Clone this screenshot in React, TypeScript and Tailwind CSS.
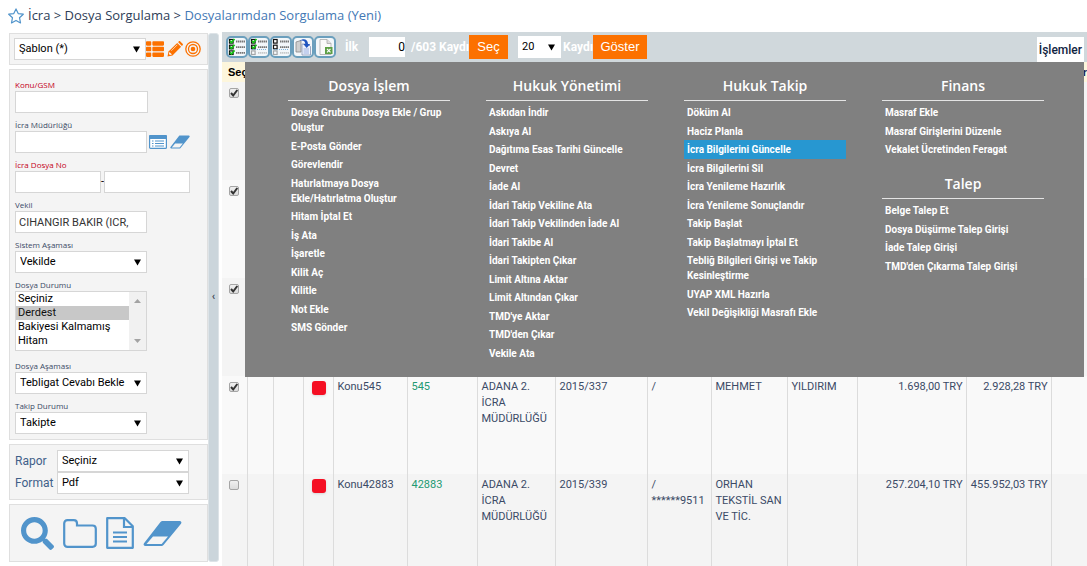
import { ReactNode, useState } from 'react';
import { FaSearch, FaThList } from 'react-icons/fa';

type SelectBoxProps = {
  id: string;
  value: string;
  width?: string;
  border?: string;
};

type MenuGroup = {
  title: string;
  items: string[];
};

type Row = {
  checked: boolean;
  konu?: string;
  no?: string;
  mudurluk?: string;
  dosya?: string;
  tel?: string;
  ad?: string;
  soyad?: string;
  tutar?: string;
  bakiye?: string;
};

const ACTIVE_ITEM = 'İcra Bilgilerini Güncelle';

const menuColumns: MenuGroup[][] = [
  [
    {
      title: 'Dosya İşlem',
      items: [
        'Dosya Grubuna Dosya Ekle / Grup Oluştur', 'E-Posta Gönder', 'Görevlendir',
        'Hatırlatmaya Dosya Ekle/Hatırlatma Oluştur', 'Hitam İptal Et', 'İş Ata',
        'İşaretle', 'Kilit Aç', 'Kilitle', 'Not Ekle', 'SMS Gönder',
      ],
    },
  ],
  [
    {
      title: 'Hukuk Yönetimi',
      items: [
        'Askıdan İndir', 'Askıya Al', 'Dağıtıma Esas Tarihi Güncelle', 'Devret', 'İade Al',
        'İdari Takip Vekiline Ata', 'İdari Takip Vekilinden İade Al', 'İdari Takibe Al',
        'İdari Takipten Çıkar', 'Limit Altına Aktar', 'Limit Altından Çıkar',
        "TMD'ye Aktar", "TMD'den Çıkar", 'Vekile Ata',
      ],
    },
  ],
  [
    {
      title: 'Hukuk Takip',
      items: [
        'Döküm Al', 'Haciz Planla', 'İcra Bilgilerini Güncelle', 'İcra Bilgilerini Sil',
        'İcra Yenileme Hazırlık', 'İcra Yenileme Sonuçlandır', 'Takip Başlat',
        'Takip Başlatmayı İptal Et', 'Tebliğ Bilgileri Girişi ve Takip Kesinleştirme',
        'UYAP XML Hazırla', 'Vekil Değişikliği Masrafı Ekle',
      ],
    },
  ],
  [
    {
      title: 'Finans',
      items: ['Masraf Ekle', 'Masraf Girişlerini Düzenle', 'Vekalet Ücretinden Feragat'],
    },
    {
      title: 'Talep',
      items: [
        'Belge Talep Et', 'Dosya Düşürme Talep Girişi', 'İade Talep Girişi',
        "TMD'den Çıkarma Talep Girişi",
      ],
    },
  ],
];

const rows: Row[] = [
  { checked: true },
  { checked: true },
  { checked: true },
  {
    checked: true,
    konu: 'Konu545',
    no: '545',
    mudurluk: 'ADANA 2. İCRA MÜDÜRLÜĞÜ',
    dosya: '2015/337',
    tel: '/',
    ad: 'MEHMET',
    soyad: 'YILDIRIM',
    tutar: '1.698,00 TRY',
    bakiye: '2.928,28 TRY',
  },
  {
    checked: false,
    konu: 'Konu42883',
    no: '42883',
    mudurluk: 'ADANA 2. İCRA MÜDÜRLÜĞÜ',
    dosya: '2015/339',
    tel: '/ ******9511',
    ad: 'ORHAN TEKSTİL SAN VE TİC.',
    tutar: '257.204,10 TRY',
    bakiye: '455.952,03 TRY',
  },
];

function Star() {
  return (
    <svg className="size-4" viewBox="0 0 16 16" fill="none" stroke="#5194cb" strokeWidth="1.2" strokeLinejoin="round">
      <path d="M8 .9l2.2 4.7 5.1.6-3.8 3.5 1 5.2L8 12.4l-4.5 2.5 1-5.2L.7 6.2l5.1-.6z" />
    </svg>
  );
}

function Pencil() {
  return (
    <svg className="size-4" viewBox="0 0 16 16">
      <path d="M.5 15.5l1-5L10.200 1.900l3.900 3.900L5.500 14.500z" fill="#fc7100" />
      <path d="M11 1.100l.8-.7c.5-.4 1-.4 1.500 0l2.300 2.300c.5.5.5 1 0 1.500l-.7.800z" fill="#fc7100" />
      <path d="M2.400 11l2.600 2.600-2 .5-1.100-1.100z" fill="#f4f4f4" />
      <path d="M4.300 9.800l6-6" stroke="#f4f4f4" strokeWidth=".7" />
    </svg>
  );
}

function Target() {
  return (
    <svg className="size-4" viewBox="0 0 16 16" fill="none" stroke="#fc7100">
      <circle cx="8" cy="8" r="7.200" strokeWidth="1.300" />
      <circle cx="8" cy="8" r="4.500" strokeWidth="1.300" />
      <circle cx="8" cy="8" r="2.300" fill="#fc7100" stroke="none" />
    </svg>
  );
}

function ListCard() {
  return (
    <svg className="h-[14px] w-[18px]" viewBox="0 0 18 14">
      <rect x=".6" y=".6" width="16.800" height="12.800" rx="1" fill="#fff" stroke="#5194cb" strokeWidth="1.200" />
      <path d="M0 1.200Q0 0 1.200 0h15.600Q18 0 18 1.200V4H0z" fill="#5194cb" />
      <path d="M3 6h1.500M3 8.500h1.500M3 11h1.500M6 6h9M6 8.500h9M6 11h9" stroke="#5194cb" />
    </svg>
  );
}

function Eraser({ className }: { className: string }) {
  return (
    <svg className={className} viewBox="0 0 39 27">
      <path
        d="M19.500 1h17.200c1.500 0 2.300 1.500 1.300 2.700L20.500 25c-.6.700-1.200 1-2 1H2.300C.8 26 0 24.500 1 23.300L17.500 2c.6-.7 1.200-1 2-1z"
        fill="#5194cb"
      />
      <path d="M10 16.500h15l-6.300 7.500H3.500z" fill="#f4f4f4" />
    </svg>
  );
}

function Folder() {
  return (
    <svg className="h-[29px] w-[34px]" viewBox="0 0 34 29" fill="none" stroke="#5194cb" strokeWidth="2.200">
      <path d="M1.200 4.500c0-2 1.300-3.300 3.300-3.300h6.200c2 0 3.300 1.300 3.300 3.300v2h15.500c2 0 3.300 1.300 3.300 3.300v14.700c0 2-1.300 3.300-3.300 3.300h-25c-2 0-3.300-1.300-3.300-3.300z" />
    </svg>
  );
}

function FileText() {
  return (
    <svg className="h-8 w-7" viewBox="0 0 28 32" fill="none" stroke="#5194cb" strokeWidth="2.200">
      <path d="M1.200 1.200h17.600l8 8v21.600H1.200z" strokeLinejoin="round" />
      <path d="M18 1.500v8.500h8.500" />
      <path d="M7 15.500h14M7 20h14M7 24.500h14" strokeWidth="1.900" />
    </svg>
  );
}

// three lines of a check list, `count` of them ticked
function CheckLines({ count }: { count: number }) {
  return (
    <svg className="size-[18px]" viewBox="0 0 18 18">
      {[0, 1, 2].map((i) => {
        const y = 1 + i * 5.700;
        const faded = i === 2 && count < 3;
        return (
          <g key={i} transform={`translate(0 ${y})`} opacity={faded ? 0.35 : 1}>
            <rect x="1.500" y=".5" width="3.600" height="3.600" fill="#fff" stroke="#111" strokeWidth="1.200" />
            {i < count && <path d="M2 1.800l1.500 1.800L6.500 0" fill="none" stroke="#14c014" strokeWidth="1.700" />}
            <path d="M8 2.500h9" stroke="#777" strokeWidth="1.800" strokeDasharray="1.500 .5" />
          </g>
        );
      })}
      {count < 3 && <path d="M1 11.500h16" stroke="#7fb4dc" strokeDasharray="1 1" />}
    </svg>
  );
}

function CopyPages() {
  return (
    <svg className="size-[18px]" viewBox="0 0 18 18">
      <path d="M2 4l5-1.500V14H2z" fill="#d0d0d0" stroke="#888" strokeWidth=".8" />
      <path d="M8 6h6l2.500 2.500V17H8z" fill="#eef3fc" stroke="#8795b5" strokeWidth=".8" />
      <path d="M9.500 11h5.500M9.500 13h5.500M9.500 15h5.500" stroke="#9aaee0" />
      <path d="M5.500 2.800c4-3 8.500-1.500 8.500 3.200h2.200L12.700 10 9.300 6h2c0-3-2.500-4-5.800-3.200z" fill="#1f55c0" />
    </svg>
  );
}

function ExcelPage() {
  return (
    <svg className="size-[18px]" viewBox="0 0 18 18">
      <path d="M4 1.500h7l4 4v11H4z" fill="#fafafa" stroke="#aaa" strokeWidth=".8" />
      <path d="M11 1.500v4h4" fill="#ddd" stroke="#aaa" strokeWidth=".8" />
      <rect x="9" y="9" width="7.500" height="7" fill="#5d9f45" />
      <path d="M11 10.800l3.500 3.500M14.500 10.800L11 14.300" stroke="#fff" strokeWidth="1.200" />
    </svg>
  );
}

function Panel({ children, className = '' }: { children: ReactNode; className?: string }) {
  return <section className={`border border-[#dfdfdf] bg-[#f4f4f4] ${className}`}>{children}</section>;
}

function SelectBox({ id, value, width = 'w-[132px]', border = 'border border-[#d6d6d6]' }: SelectBoxProps) {
  return (
    <div className={`relative ${width}`}>
      <select id={id} className={`block h-[22px] w-full appearance-none bg-white pr-4 pl-1 text-[11px] text-black ${border}`}>
        <option>{value}</option>
      </select>
      <svg className="pointer-events-none absolute top-2 right-[6px] size-[7px]" viewBox="0 0 7 7">
        <path d="M0 .5h7L3.500 6.500z" fill="#000" />
      </svg>
    </div>
  );
}

function Field({ id, label, red, children }: { id: string; label: string; red?: boolean; children: ReactNode }) {
  return (
    <div>
      <label
        htmlFor={id}
        className={`block font-['Open_Sans','Noto_Sans',sans-serif] text-[8px] leading-3 ${red ? 'text-[#c4001a]' : 'text-[#3b4a66]'}`}
      >
        {label}
      </label>
      {children}
    </div>
  );
}

function CheckBox({ label, defaultChecked }: { label: string; defaultChecked: boolean }) {
  return (
    <span className="relative mx-auto block size-[10px]">
      <input
        type="checkbox"
        aria-label={label}
        defaultChecked={defaultChecked}
        className="peer block size-[10px] appearance-none rounded-[2px] border border-[#a5a5a5] bg-linear-to-b from-[#f0f0f0] to-[#dcdcdc]"
      />
      <svg className="pointer-events-none absolute inset-0 hidden size-[10px] peer-checked:block" viewBox="0 0 10 10">
        <path d="M2 5l2.200 2.500L8.300 2" fill="none" stroke="#333" strokeWidth="2" />
      </svg>
    </span>
  );
}

function ActionsMenu() {
  return (
    <nav className="absolute top-[30px] right-[3px] left-[23px] z-10 flex gap-9 bg-[#808080] pt-[14px] pb-[15px] pl-[43px] text-white">
      {menuColumns.map((groups, i) => (
        <div key={i} className="flex w-[162px] flex-col gap-[15px]">
          {groups.map((group) => (
            <div key={group.title}>
              <h3 className="mb-[2px] border-b border-[#e4e4e4] pb-1 text-center font-['Open_Sans','Noto_Sans',sans-serif] text-[14px] leading-5 font-semibold">
                {group.title}
              </h3>
              <ul>
                {group.items.map((item) => (
                  <li key={item} className={`pt-[2px] pb-[2px] even:pb-px ${item === ACTIVE_ITEM ? 'bg-[#2797d1]' : ''}`}>
                    <a href="#" className="block pl-[3px] text-[10px] leading-[15px] font-bold">{item}</a>
                  </li>
                ))}
              </ul>
            </div>
          ))}
        </div>
      ))}
    </nav>
  );
}

function Toolbar() {
  const [count, setCount] = useState('0');

  const tools = [
    { name: 'Tümünü seç', icon: <CheckLines count={3} /> },
    { name: 'Sayfayı seç', icon: <CheckLines count={2} /> },
    { name: 'Seçimi kaldır', icon: <CheckLines count={0} /> },
    { name: 'Kopyala', icon: <CopyPages /> },
    { name: 'Excel', icon: <ExcelPage /> },
  ];

  return (
    <div className="flex h-[30px] items-center bg-[#d0d8dc] pr-[3px] pl-1 text-[12px] font-bold text-white">
      {tools.map((tool) => (
        <button
          key={tool.name}
          aria-label={tool.name}
          className="flex size-[22px] items-center justify-center rounded-[5px] border-2 border-[#6b9fbd] bg-[#f3f7fa]"
        >
          {tool.icon}
        </button>
      ))}
      <label htmlFor="ilk" className="ml-[9px] w-6">İlk</label>
      <input
        id="ilk"
        value={count}
        onChange={(e) => setCount(e.target.value)}
        className="h-5 w-9 bg-white text-right text-[12px] font-normal text-black"
      />
      <span className="ml-[6px] w-[58px] whitespace-nowrap">/603 Kaydı</span>
      <button className="h-6 w-[39px] bg-[#fc7100] font-['Liberation_Sans',sans-serif] text-[13px] font-normal">Seç</button>
      <div className="ml-[10px] font-normal">
        <SelectBox id="adet" value="20" width="w-[43px]" border="" />
      </div>
      <label htmlFor="adet" className="ml-[2px] w-[30px] whitespace-nowrap">Kaydı</label>
      <button className="h-6 w-[54px] bg-[#fc7100] font-['Liberation_Sans',sans-serif] text-[13px] font-normal">Göster</button>
      <button className="ml-auto h-[25px] self-end bg-white px-[2px] text-[12px] font-medium text-[#10243f]">İşlemler</button>
    </div>
  );
}

function ResultsTable() {
  const cell = 'border-l border-[#dcdcdc] pr-[3px] pl-1 pt-[3px] align-top';

  return (
    <table className="w-full table-fixed border-collapse text-[11px] leading-4 text-[#3b4a66]">
      <colgroup>
        <col className="w-[25px]" />
        <col className="w-[26px]" />
        <col className="w-[30px]" />
        <col className="w-[30px]" />
        <col className="w-[74px]" />
        <col className="w-[70px]" />
        <col className="w-[78px]" />
        <col className="w-[92px]" />
        <col className="w-[64px]" />
        <col className="w-[76px]" />
        <col className="w-[70px]" />
        <col className="w-[109px]" />
        <col className="w-[85px]" />
        <col />
      </colgroup>
      <thead>
        <tr className="h-5 bg-[#fdf6dc] font-['Liberation_Sans',sans-serif] text-[11px] text-black">
          <th className="pl-[6px] text-left">Seç</th>
          <th colSpan={12} />
          <th className="text-right text-[#1a2550]">r</th>
        </tr>
      </thead>
      <tbody>
        {rows.map((row, i) => (
          <tr key={i} className="h-[98px] odd:bg-[#f4f4f4] even:bg-[#f9f9f9]">
            <td className="pt-[6px] align-top">
              <CheckBox label={`Satır ${i + 1}`} defaultChecked={row.checked} />
            </td>
            <td className={cell} />
            <td className={cell} />
            <td className="border-l border-[#dcdcdc] pt-[5px] pl-2 align-top">
              {row.konu && <span className="block size-[14px] rounded-[3px] bg-[#f50f23] shadow-sm" />}
            </td>
            <td className={cell}>{row.konu}</td>
            <td className={`${cell} text-[#229a72]`}>{row.no}</td>
            <td className={cell}>{row.mudurluk}</td>
            <td className={cell}>{row.dosya}</td>
            <td className={cell}>{row.tel}</td>
            <td className={cell}>{row.ad}</td>
            <td className={cell}>{row.soyad}</td>
            <td className={`${cell} text-right`}>{row.tutar}</td>
            <td className={`${cell} text-right`}>{row.bakiye}</td>
            <td className={cell} />
          </tr>
        ))}
      </tbody>
    </table>
  );
}

function Sidebar() {
  const input = 'block h-[22px] border border-[#d6d6d6] bg-white px-[3px] text-[11px] text-[#333]';

  return (
    <aside className="flex w-[199px] shrink-0 flex-col gap-1">
      <Panel className="flex items-center px-1 py-1">
        <SelectBox id="sablon" value="Şablon (*)" />
        <div className="flex flex-1 items-center justify-between pr-[2px] text-[#fc7100]">
          <button aria-label="Liste"><FaThList className="size-[18px]" /></button>
          <button aria-label="Düzenle"><Pencil /></button>
          <button aria-label="Hedef"><Target /></button>
        </div>
      </Panel>

      <Panel className="flex flex-col gap-[6px] px-[5px] pt-[9px] pb-[5px]">
        <Field id="konu" label="Konu/GSM" red>
          <input id="konu" className={`${input} w-[133px]`} />
        </Field>
        <Field id="mudurluk" label="İcra Müdürlüğü">
          <div className="flex items-center">
            <input id="mudurluk" className={`${input} w-[132px]`} />
            <button aria-label="Seç" className="ml-[2px]"><ListCard /></button>
            <button aria-label="Temizle" className="ml-[3px]"><Eraser className="h-[14px] w-5" /></button>
          </div>
        </Field>
        <Field id="dosya-no" label="İcra Dosya No" red>
          <div className="flex items-center text-[11px]">
            <input id="dosya-no" className={`${input} w-[86px]`} />
            <span className="w-[3px]">-</span>
            <input aria-label="İcra Dosya No" className={`${input} w-[86px]`} />
          </div>
        </Field>
        <Field id="vekil" label="Vekil">
          <input id="vekil" defaultValue="CIHANGIR BAKIR (ICR," className={`${input} w-[132px]`} />
        </Field>
        <Field id="sistem" label="Sistem Aşaması">
          <SelectBox id="sistem" value="Vekilde" />
        </Field>
        <Field id="durum" label="Dosya Durumu">
          <div className="relative mb-[3px] w-[132px]">
            <select
              id="durum"
              size={4}
              defaultValue="Derdest"
              className="block h-[60px] w-full overflow-hidden border border-[#d6d6d6] bg-white text-[11px] leading-[14px] text-black [scrollbar-width:none]"
            >
              {['Seçiniz', 'Derdest', 'Bakiyesi Kalmamış', 'Hitam'].map((name) => (
                <option key={name} className="h-[14px] min-h-0 px-[2px] py-0 checked:bg-[#c8c8c8]">{name}</option>
              ))}
            </select>
            <div className="absolute top-px right-px bottom-px flex w-[17px] flex-col items-center justify-between bg-[#f1f1f1] py-[7px]">
              <svg className="h-1 w-[7px]" viewBox="0 0 7 4"><path d="M0 4h7L3.500 0z" fill="#a3a3a3" /></svg>
              <svg className="h-1 w-[7px]" viewBox="0 0 7 4"><path d="M0 0h7L3.500 4z" fill="#a3a3a3" /></svg>
            </div>
          </div>
        </Field>
        <Field id="asama" label="Dosya Aşaması">
          <SelectBox id="asama" value="Tebligat Cevabı Bekle" />
        </Field>
        <Field id="takip" label="Takip Durumu">
          <SelectBox id="takip" value="Takipte" />
        </Field>
      </Panel>

      <Panel className="px-[5px] py-[5px] text-[12px] text-[#3f6089]">
        <div className="flex items-center">
          <label htmlFor="rapor" className="w-[42px]">Rapor</label>
          <SelectBox id="rapor" value="Seçiniz" />
        </div>
        <div className="flex items-center">
          <label htmlFor="format" className="w-[42px]">Format</label>
          <SelectBox id="format" value="Pdf" />
        </div>
      </Panel>

      <Panel className="flex h-[58px] items-center gap-[9px] pl-[11px] text-[#5194cb]">
        <button aria-label="Ara"><FaSearch className="size-[33px]" /></button>
        <button aria-label="Klasör"><Folder /></button>
        <button aria-label="Belge"><FileText /></button>
        <button aria-label="Temizle"><Eraser className="h-[27px] w-[39px]" /></button>
      </Panel>
    </aside>
  );
}

export default function App() {
  return (
    <div className="flex h-screen flex-col overflow-hidden bg-white font-['Roboto','Noto_Sans',sans-serif]">
      <header className="flex h-8 shrink-0 items-center gap-1 pl-2 font-['Open_Sans','Noto_Sans',sans-serif] text-[13px] text-[#2e3d57]">
        <Star />
        <span>İcra &gt; Dosya Sorgulama &gt; <a href="#" className="text-[#4378b5]">Dosyalarımdan Sorgulama (Yeni)</a></span>
      </header>

      <div className="flex min-h-0 flex-1 pl-[9px]">
        <div className="flex items-start pt-px pb-1">
          <Sidebar />
          <button
            aria-label="Paneli daralt"
            className="flex w-[11px] items-center justify-center self-stretch rounded-[3px] border border-[#dde3e7] bg-[#cbd5db] text-[11px] font-bold text-[#3f4a55]"
          >
            ‹
          </button>
        </div>
        <main className="relative ml-[3px] min-w-0 flex-1">
          <Toolbar />
          <ActionsMenu />
          <ResultsTable />
        </main>
      </div>
    </div>
  );
}
